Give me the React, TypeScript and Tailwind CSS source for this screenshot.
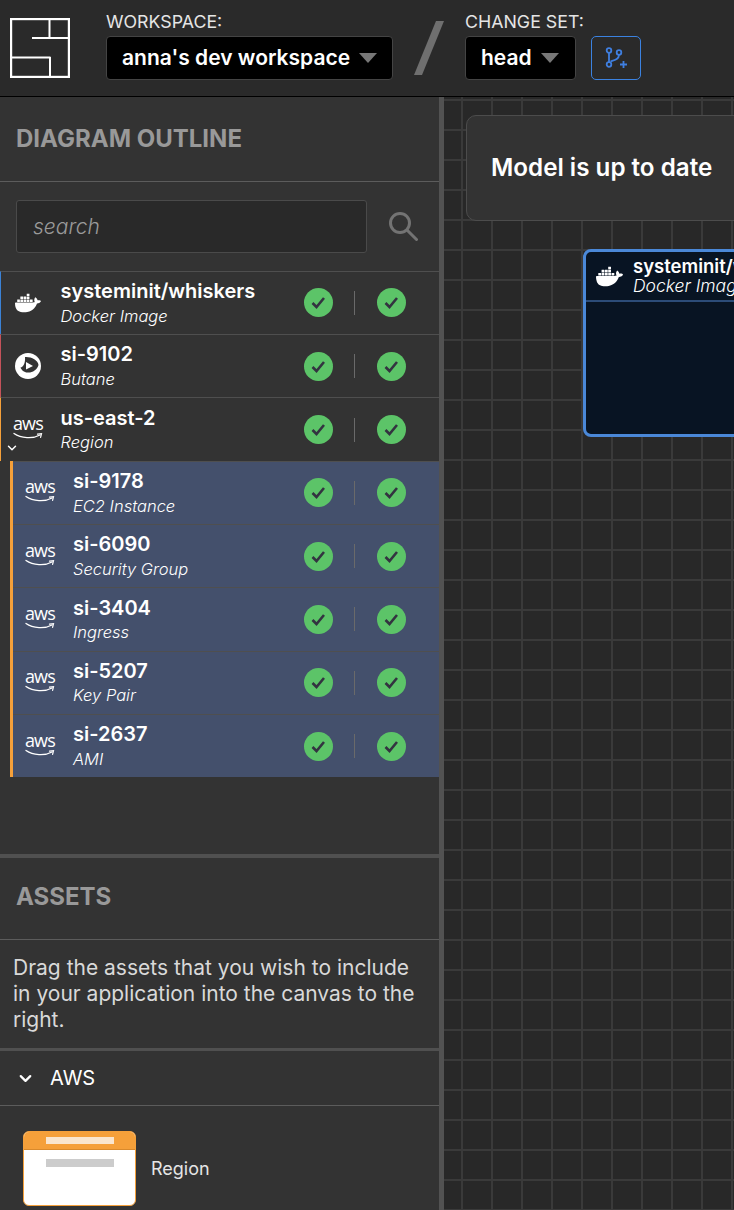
import { ChevronDown } from 'lucide-react';
import { SiDocker } from 'react-icons/si';

type Accent = 'blue' | 'red' | 'orange';
type Logo = 'docker' | 'butane' | 'aws';

interface RowProps {
  name: string;
  type: string;
  logo: Logo;
  accent?: Accent;
  open?: boolean;
}

const topRows: RowProps[] = [
  { name: 'systeminit/whiskers', type: 'Docker Image', logo: 'docker', accent: 'blue' },
  { name: 'si-9102', type: 'Butane', logo: 'butane', accent: 'red' },
  { name: 'us-east-2', type: 'Region', logo: 'aws', accent: 'orange', open: true },
];

const childRows: RowProps[] = [
  { name: 'si-9178', type: 'EC2 Instance', logo: 'aws' },
  { name: 'si-6090', type: 'Security Group', logo: 'aws' },
  { name: 'si-3404', type: 'Ingress', logo: 'aws' },
  { name: 'si-5207', type: 'Key Pair', logo: 'aws' },
  { name: 'si-2637', type: 'AMI', logo: 'aws' },
];

const accentClass: Record<Accent, string> = {
  blue: 'border-l-[#3b82d6]',
  red: 'border-l-[#c4525a]',
  orange: 'border-l-[#f5a03a]',
};

const SiLogo = () => (
  <svg width="60" height="60" viewBox="0 0 60 60" fill="none" stroke="#fff" strokeWidth="2" className="shrink-0">
    <rect x="1" y="1" width="58" height="58" strokeWidth="2.4" />
    <path d="M39.5 1v19M22 20h37M1 39.5h39.5M40 39v20" />
  </svg>
);

const Caret = () => (
  <span className="h-0 w-0 border-x-[9.5px] border-t-[10px] border-x-transparent border-t-[#777777]" />
);

const AwsLogo = () => (
  <div className="-mt-[3px] flex w-[32px] flex-col items-center">
    <span className="text-[18px] leading-[15px] font-normal tracking-[-0.8px] text-white font-['Open_Sans',sans-serif]">aws</span>
    <svg width="30" height="8" viewBox="0 0 30 8" fill="none" className="mt-[1px]">
      <path d="M1 1.5C8 6.5 20 7 27 3" stroke="#fff" strokeWidth="1.3" strokeLinecap="round" />
      <path d="M24.5 2.2L28.5 1.6L27.6 5.4" stroke="#fff" strokeWidth="1.2" strokeLinecap="round" />
    </svg>
  </div>
);

const ButaneLogo = () => (
  <svg width="26" height="26" viewBox="0 0 26 26">
    <circle cx="13" cy="13" r="13" fill="#fff" />
    <path d="M10 4C16 3.5 23 7 23.5 12C22 17 17 20 12.5 19.5C9 19.5 6.5 17 5.5 14.5C8.5 14 10.5 10 10 4Z" fill="#333333" />
    <path d="M11 9L18 13L11 16.5Z" fill="#fff" />
  </svg>
);

const RowLogo = ({ logo }: { logo: Logo }) => {
  if (logo === 'docker') return <SiDocker size={26} color="#fff" />;
  if (logo === 'butane') return <ButaneLogo />;
  return <AwsLogo />;
};

const CheckBadge = () => (
  <svg width="29" height="29" viewBox="0 0 29 29" className="shrink-0">
    <circle cx="14.5" cy="14.5" r="14.5" fill="#5cc468" />
    <path d="M8.5 15L12.5 19L20 10" fill="none" stroke="#333340" strokeWidth="2.6" />
  </svg>
);

const Row = ({ name, type, logo, accent, open }: RowProps) => (
  <div className={`relative flex h-[63.3px] items-center border-t border-t-[#4f4f4f] ${accent ? `border-l-[1.5px] ${accentClass[accent]}` : ''}`}>
    <div className={`flex w-[54px] shrink-0 justify-center ${accent ? 'mr-[5.5px]' : 'mr-[6px]'}`}>
      <RowLogo logo={logo} />
    </div>
    {open && <ChevronDown size={14} color="#fff" strokeWidth={2.5} className="absolute left-[4px] top-[43px]" />}
    <div className="min-w-0 flex-1 -mt-[1px] text-white">
      <div className="text-[20px] leading-[24px] font-semibold whitespace-nowrap">{name}</div>
      <div className="mt-[2.5px] text-[16.5px] leading-[20px] font-light italic whitespace-nowrap">{type}</div>
    </div>
    <div className="flex w-[135.5px] shrink-0 items-center">
      <CheckBadge />
      <div className="mr-[22px] ml-[21px] h-[24px] w-px bg-[#6a6a6a]" />
      <CheckBadge />
    </div>
  </div>
);

const Field = ({ label, value, width }: { label: string; value: string; width: string }) => (
  <div className={`flex flex-col ${width}`}>
    <span className="text-[17.8px] leading-[20px] text-[#e5e5e5] whitespace-nowrap">{label}</span>
    <div className="mt-[4px] flex h-[44px] items-center rounded-[4px] border border-[#444444] bg-black pl-[15px]">
      <span className="text-[21px] font-semibold text-white whitespace-nowrap">{value}</span>
      <span className="ml-[9px] flex"><Caret /></span>
    </div>
  </div>
);

export default function App() {
  return (
    <div className="flex h-[1210px] w-[734px] flex-col overflow-hidden bg-[#282828] font-['Inter',sans-serif]">
      <header className="flex h-[97px] shrink-0 items-center border-b border-b-black bg-[#2a2a2a] pl-[10px]">
        <SiLogo />
        <div className="ml-[36px] -mt-[4px]">
          <Field label="WORKSPACE:" value="anna's dev workspace" width="w-[287px]" />
        </div>
        <svg width="30" height="54" viewBox="0 0 30 54" className="mx-[21px] shrink-0">
          <polygon points="22,0 30,0 8,54 0,54" fill="#6f6f6f" />
        </svg>
        <div className="-mt-[4px]">
          <Field label="CHANGE SET:" value="head" width="w-[111px]" />
        </div>
        <div className="ml-[15px] mt-[19px] flex h-[44px] w-[50px] items-center justify-center rounded-[5px] border border-[#3b82e0]">
          <svg width="22" height="22" viewBox="0 0 22 22" fill="none" stroke="#3f7fe0" strokeWidth="1.8">
            <circle cx="4" cy="3.5" r="2.3" />
            <circle cx="14" cy="5.5" r="2.3" />
            <circle cx="4" cy="17.5" r="2.3" />
            <path d="M4 6v9M14 8c0 4-4 5-8.5 6.5M15 17.5h7M18.5 14v7" />
          </svg>
        </div>
      </header>

      <div className="flex min-h-0 flex-1">
        <aside className="flex w-[439px] shrink-0 flex-col bg-[#333333]">
          <div className="flex h-[85px] shrink-0 items-center border-b border-b-[#5c5c5c] pl-[16px]">
            <h2 className="text-[24px] font-bold text-[#999999] -mt-[1px]">DIAGRAM OUTLINE</h2>
          </div>
          <div className="flex h-[88.8px] shrink-0 items-center pl-[16px]">
            <div className="flex h-[53px] w-[351px] items-center rounded-[3px] border border-[#4a4a4a] bg-[#292929] pl-[16px]">
              <span className="text-[21px] font-light italic text-[#9a9a9a]">search</span>
            </div>
            <svg width="29" height="29" viewBox="0 0 29 29" fill="none" stroke="#737373" strokeWidth="3" className="ml-[22px]">
              <circle cx="11" cy="11" r="9.5" />
              <path d="M18 18l9.5 9.5" strokeLinecap="round" />
            </svg>
          </div>
          <div className="h-[506.4px] shrink-0">
            {topRows.map((row) => (
              <Row key={row.name} {...row} />
            ))}
            <div className="ml-[10px] border-l-[3px] border-l-[#f5a03a] bg-[#44506c]">
              {childRows.map((row) => (
                <Row key={row.name} {...row} />
              ))}
            </div>
          </div>

          <div className="h-[77px] shrink-0" />
          <div className="flex h-[86px] shrink-0 items-center border-t-[4px] border-b border-t-[#505050] border-b-[#5c5c5c] pl-[16px]">
            <h2 className="text-[24px] font-bold text-[#999999] -mt-[4px]">ASSETS</h2>
          </div>
          <p className="h-[111px] shrink-0 border-b-[3px] border-b-[#505050] pt-[15px] pr-[20px] pl-[13px] text-[21px] leading-[26px] text-[#d9d9d9]">
            Drag the assets that you wish to include in your application into the canvas to the right.
          </p>
          <div className="flex h-[55px] shrink-0 items-center border-b border-b-[#5c5c5c] pl-[16px]">
            <ChevronDown size={19} color="#fff" strokeWidth={2.8} />
            <span className="ml-[15px] text-[20px] text-white">AWS</span>
          </div>
          <div className="flex items-center pt-[25px] pl-[23px]">
            <div className="flex h-[75px] w-[113px] shrink-0 flex-col overflow-hidden rounded-[6px] border border-[#f5a03a] bg-white">
              <div className="flex h-[18px] shrink-0 justify-center border-b border-b-[#d98a2c] bg-[#f5a03a] pt-[5px]">
                <div className="h-[7px] w-[68px] bg-[#fae6ce]" />
              </div>
              <div className="mx-auto mt-[9px] h-[8px] w-[68px] bg-[#cccccc]" />
            </div>
            <span className="ml-[15px] text-[18px] text-[#e5e5e5]">Region</span>
          </div>
        </aside>

        <div className="w-[5px] shrink-0 bg-[#525252]" />

        <main className="relative min-w-0 flex-1 overflow-hidden bg-[#282828] bg-[linear-gradient(to_right,#3a3a3a_2px,transparent_2px),linear-gradient(to_bottom,#3a3a3a_2px,transparent_2px)] bg-[size:30px_30px] bg-[position:17px_2px]">
          <div className="absolute top-[18px] left-[22px] flex h-[106px] w-[300px] items-center rounded-[10px] border border-[#4c4c4c] bg-[#333333] pl-[24px]">
            <span className="text-[24.2px] font-semibold text-white whitespace-nowrap">Model is up to date</span>
          </div>
          <div className="absolute top-[152px] left-[139px] h-[188px] w-[300px] rounded-[8px] border-[3px] border-[#4a88d8] bg-[#081423]">
            <div className="flex h-[50px] items-center border-b-2 border-b-[#2c4c78] pl-[10px]">
              <SiDocker size={27} color="#fff" className="shrink-0" />
              <div className="ml-[10px] text-white">
                <div className="text-[18.5px] leading-[20px] font-semibold whitespace-nowrap">systeminit/whiskers</div>
                <div className="text-[17.5px] leading-[20px] font-light italic whitespace-nowrap">Docker Image</div>
              </div>
            </div>
          </div>
        </main>
      </div>
    </div>
  );
}
